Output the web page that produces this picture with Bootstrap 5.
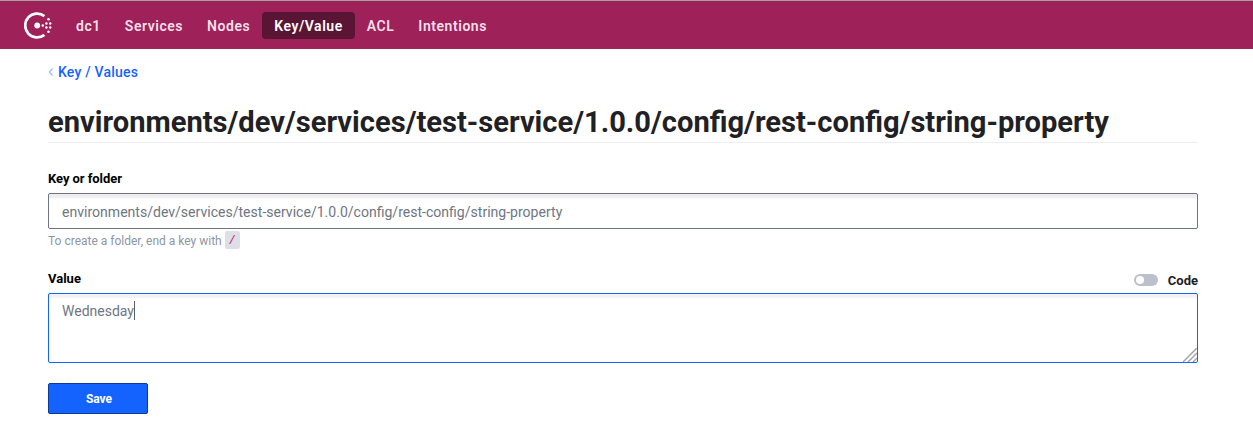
<!DOCTYPE html>
<html lang="en">
<head>
<meta charset="utf-8">
<meta name="viewport" content="width=device-width, initial-scale=1">
<title>Consul - Key/Value</title>
<link href="https://cdn.jsdelivr.net/npm/bootstrap@5.3.0/dist/css/bootstrap.min.css" rel="stylesheet">
<style>
body { font-family: Roboto, "Liberation Sans", sans-serif; color: #1f2124; overflow: hidden; }
.topbar { height: 49px; background: #9e2159; border-top: 1px solid #a2a2a2; padding: 0 0 0 24px; }
.topbar .nav-link { font-size: 14px; font-weight: 600; line-height: 22px; letter-spacing: .54px; color: #f3dfe8; padding: 3px 12px; border-radius: 4px; height: 27px; }
.topbar .nav-link.active { background: #5a1434; color: #fff; }
.page { padding: 0 55px 0 48px; }
.crumb { font-size: 14px; font-weight: 500; line-height: 20px; margin-top: 13px; color: #1563ff; letter-spacing: .2px; }
.title { font-size: 29.11px; font-weight: 700; line-height: 40px; margin: 20px 0 0; height: 41px; border-bottom: 1px solid #ebeef2; white-space: nowrap; }
.field-label { font-size: 13px; font-weight: 700; line-height: 20px; color: #000; }
.key-label { margin-top: 26px; letter-spacing: -.06px; }
.code-toggle { color: #1f2124; gap: 10px; padding-top: 2px; height: 22px; margin-bottom: -2px; }
.field { border: 1px solid #6f7682; border-radius: 2px; padding: 0 13px; font-size: 14px; color: #6f7682; box-shadow: inset 0 4px 1px rgba(100,80,110,.1); background: #fff; }
.key-field { height: 36px; line-height: 36px; margin-top: 4px; font-size: 14.05px; }
.value-field { height: 70px; border-color: #1563ff; padding-top: 7px; line-height: 20px; margin-top: 4px; box-shadow: inset 0 4px 1px rgba(100,100,100,.08); }
.caret { width: 1px; height: 19px; background: #59606b; }
.hint { font-size: 12px; line-height: 18px; color: #8e96a3; margin-top: 3px; }
.hint code { font-family: "Liberation Mono", monospace; font-size: 12px; line-height: 20px; color: #c62a71; background: #dce0e6; border-radius: 2px; width: 15px; height: 18px; margin: -1px 0 0 3px; text-align: center; }
.value-row { margin-top: 19px; }
.switch { width: 24px; height: 12px; border-radius: 6px; background: #bac1cc; padding: 2px; margin-bottom: 2px; }
.switch span { width: 8px; height: 8px; border-radius: 50%; background: #fff; }
.save { width: 100px; height: 31px; margin-top: 20px; padding: 0 0 0 2px; font-size: 12px; font-weight: 700; color: #fff; background: #1563ff; border: 1px solid #0e3a94; border-radius: 2px; box-shadow: 0 3px 1px rgba(0,0,0,.12); }
.grip { right: 0; bottom: 0; }
</style>
<script src="https://cdn.jsdelivr.net/npm/bootstrap@5.3.0/dist/js/bootstrap.bundle.min.js"></script>
</head>
<body>
<header class="topbar d-flex align-items-center">
  <svg width="28" height="27" viewBox="0 0 28 27" fill="#fff" aria-label="Consul">
    <path d="M20.4 22.9A11.9 11.9 0 1 1 20.4 4.1" fill="none" stroke="#fff" stroke-width="2.7"/>
    <circle cx="13.2" cy="13.5" r="2.9"/>
    <circle cx="18.8" cy="13.5" r="1.25"/>
    <circle cx="22.4" cy="11.5" r="1.2"/><circle cx="22.4" cy="15.5" r="1.2"/>
    <circle cx="26.2" cy="11.5" r="1.2"/><circle cx="26.2" cy="15.5" r="1.2"/>
    <circle cx="24.5" cy="7.3" r="1.3"/><circle cx="24.5" cy="19.8" r="1.3"/>
  </svg>
  <nav class="nav ms-2 ps-1">
    <a class="nav-link" href="#">dc1</a>
    <a class="nav-link" href="#">Services</a>
    <a class="nav-link" href="#">Nodes</a>
    <a class="nav-link active" href="#">Key/Value</a>
    <a class="nav-link" href="#">ACL</a>
    <a class="nav-link" href="#">Intentions</a>
  </nav>
</header>
<main class="page">
  <a class="crumb d-flex align-items-center text-decoration-none" href="#">
    <svg class="me-1" width="6" height="8" viewBox="0 0 6 8"><path d="M4.5.5 1.5 4l3 3.5" fill="none" stroke="#a5c5fb" stroke-width="1.5"/></svg>Key / Values</a>
  <h1 class="title">environments/dev/services/test-service/1.0.0/config/rest-config/string-property</h1>
  <form>
    <div class="field-label key-label">Key or folder</div>
    <div class="field key-field">environments/dev/services/test-service/1.0.0/config/rest-config/string-property</div>
    <div class="hint d-flex"><span>To create a folder, end a key with</span><code>/</code></div>
    <div class="value-row d-flex justify-content-between">
      <div class="field-label">Value</div>
      <div class="field-label d-flex align-items-center code-toggle"><div class="switch"><span class="d-block"></span></div>Code</div>
    </div>
    <div class="field value-field position-relative d-flex">Wednesday<span class="caret"></span>
      <svg class="grip position-absolute" width="14" height="14" viewBox="0 0 14 14" stroke="#a5a5a5" stroke-width="1.5"><path d="M0 14 14 0M5 14 14 5M10 14l4-4"/></svg>
    </div>
    <button class="btn save d-block" type="button">Save</button>
  </form>
</main>
</body>
</html>
